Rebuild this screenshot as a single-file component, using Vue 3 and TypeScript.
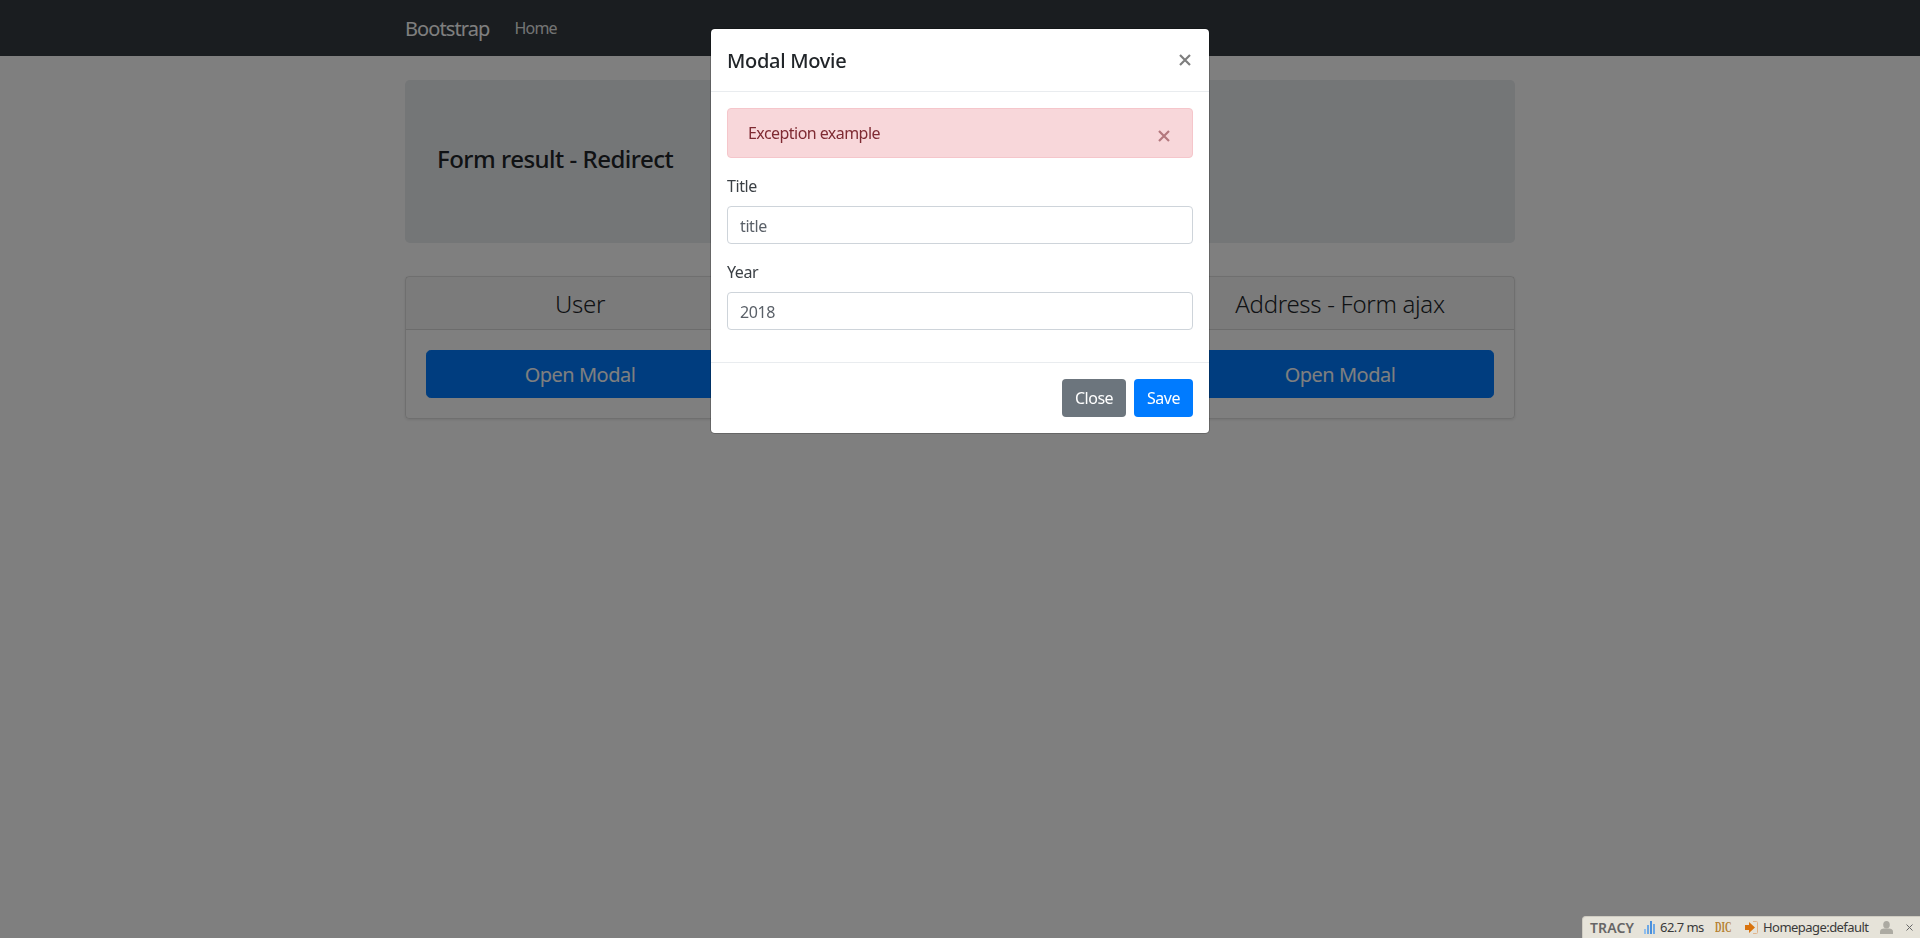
<template>
  <div class="page">
    <nav class="navbar">
      <div class="nav-inner">
        <a class="brand">Bootstrap</a>
        <a class="nav-link">Home</a>
      </div>
    </nav>

    <main class="container">
      <div class="jumbotron">
        <h4>Form result - Redirect</h4>
      </div>
      <div class="deck">
        <div v-for="card in cards" :key="card" class="card">
          <div class="card-header">{{ card }}</div>
          <div class="card-body">
            <button class="btn-open">Open Modal</button>
          </div>
        </div>
      </div>
    </main>

    <div class="backdrop"></div>

    <div class="modal">
      <div class="modal-header">
        <h5>Modal Movie</h5>
        <svg class="close" width="12" height="12" viewBox="0 0 12 12">
          <path d="M1 1l10 10M11 1L1 11" stroke="currentColor" stroke-width="2.2" fill="none" />
        </svg>
      </div>
      <div class="modal-body">
        <div class="alert">
          <span>Exception example</span>
          <svg class="alert-close" width="12" height="12" viewBox="0 0 12 12">
            <path d="M1 1l10 10M11 1L1 11" stroke="currentColor" stroke-width="2.2" fill="none" />
          </svg>
        </div>
        <div class="form-group">
          <label>Title</label>
          <input type="text" value="title" />
        </div>
        <div class="form-group">
          <label>Year</label>
          <input type="text" value="2018" />
        </div>
      </div>
      <div class="modal-footer">
        <button class="btn btn-grey">Close</button>
        <button class="btn btn-blue">Save</button>
      </div>
    </div>

    <div class="tracy">
      <span class="tracy-logo">TRACY</span>
      <svg class="tracy-chart" width="11" height="13" viewBox="0 0 11 13">
        <rect x="0" y="8" width="2" height="5" fill="#8fbdec" />
        <rect x="3" y="4" width="2" height="9" fill="#6ea8e4" />
        <rect x="6" y="0" width="2" height="13" fill="#4a90dc" />
        <rect x="9" y="3" width="2" height="10" fill="#6ea8e4" />
      </svg>
      <span class="tracy-time">62.7 ms</span>
      <span class="tracy-dic">DIC</span>
      <svg class="tracy-route" width="13" height="13" viewBox="0 0 13 13">
        <path d="M8 .5h3.5a1 1 0 0 1 1 1v10a1 1 0 0 1-1 1H8" fill="none" stroke="#e0b48c" />
        <path d="M0 4h4V1l6 5.5L4 12V9H0z" fill="#d9730d" />
      </svg>
      <span class="tracy-page">Homepage:default</span>
      <svg class="tracy-user" width="13" height="13" viewBox="0 0 13 13">
        <ellipse cx="6.5" cy="3.8" rx="3.3" ry="3.8" fill="#acaaa2" />
        <path d="M0 13v-2.5C0 8.5 2 7.5 4 7.5h5c2 0 4 1 4 3V13z" fill="#acaaa2" />
      </svg>
      <svg class="tracy-x" width="7" height="7" viewBox="0 0 7 7">
        <path d="M.5 .5l6 6M6.5 .5l-6 6" stroke="#666" stroke-width="1" fill="none" />
      </svg>
    </div>
  </div>
</template>

<script setup lang="ts">
const cards: string[] = ['User', 'Movie', 'Address - Form ajax']
</script>

<style>
body {
  margin: 0;
  background: #fff;
}
</style>

<style scoped>
.page {
  font-family: "Noto Sans", "Open Sans", sans-serif;
  font-size: 16px;
  line-height: 1.5;
  color: #212529;
  min-height: 938px;
}
.navbar {
  height: 56px;
  background: #343a40;
}
.nav-inner {
  width: 1110px;
  margin: 0 auto;
  height: 56px;
  display: flex;
  align-items: center;
}
.brand {
  font-size: 20px;
  color: #fff;
  margin-right: 17px;
  padding-top: 2px;
  letter-spacing: -0.9px;
}
.nav-link {
  color: rgba(255, 255, 255, 0.9);
  padding: 0 8px;
  letter-spacing: -0.8px;
}
.container {
  width: 1110px;
  margin: 0 auto;
  padding-top: 24px;
}
.jumbotron {
  height: 163px;
  box-sizing: border-box;
  padding: 0 32px 4px;
  display: flex;
  align-items: center;
  background: #e9ecef;
  border-radius: 4.8px;
  margin-bottom: 33px;
}
.jumbotron h4 {
  margin: 0;
  font-size: 24px;
  font-weight: 500;
  line-height: 1.2;
  letter-spacing: -0.5px;
}
.deck {
  display: flex;
  gap: 30px;
}
.card {
  flex: 1;
  border: 1px solid rgba(0, 0, 0, 0.125);
  border-radius: 4px;
  box-shadow: 0 1px 3px rgba(0, 0, 0, 0.1);
  box-sizing: border-box;
}
.card-header {
  height: 53px;
  box-sizing: border-box;
  border-bottom: 1px solid rgba(0, 0, 0, 0.125);
  background: rgba(0, 0, 0, 0.03);
  font-size: 24px;
  font-weight: 300;
  line-height: 54px;
  text-align: center;
  letter-spacing: -0.3px;
}
.card-body {
  padding: 20px;
}
.btn-open {
  display: block;
  width: 100%;
  height: 48px;
  padding: 2px 0 0;
  background: #007bff;
  color: #fff;
  border: 1px solid #007bff;
  border-radius: 4.8px;
  font: inherit;
  font-size: 20px;
  letter-spacing: -0.5px;
}
.backdrop {
  position: fixed;
  inset: 0;
  background: rgba(0, 0, 0, 0.5);
}
.modal {
  position: fixed;
  top: 28px;
  left: 710px;
  width: 500px;
  box-sizing: border-box;
  background: #fff;
  border: 1px solid rgba(0, 0, 0, 0.2);
  border-radius: 4.8px;
  background-clip: padding-box;
}
.modal-header {
  display: flex;
  justify-content: space-between;
  align-items: flex-start;
  padding: 16px;
  border-bottom: 1px solid #e9ecef;
}
.modal-header h5 {
  margin: 0;
  padding-top: 1px;
  font-size: 20px;
  font-weight: 500;
  line-height: 29px;
  letter-spacing: -0.3px;
}
.close {
  color: #000;
  opacity: 0.5;
  margin: 9px 2px 0 0;
}
.modal-body {
  padding: 16px;
}
.alert {
  display: flex;
  justify-content: space-between;
  height: 50px;
  box-sizing: border-box;
  padding: 12px 20px;
  margin-bottom: 16px;
  color: #7f2b33;
  background: #f8d7da;
  border: 1px solid #f5c6cb;
  border-radius: 4px;
  letter-spacing: -0.55px;
}
.alert-close {
  color: #721c24;
  opacity: 0.5;
  margin: 9px 2px 0 0;
}
.form-group {
  margin-bottom: 16px;
}
label {
  display: block;
  margin-bottom: 8px;
  color: #3a3f44;
  letter-spacing: -0.4px;
}
input {
  display: block;
  width: 100%;
  height: 38px;
  box-sizing: border-box;
  padding: 7px 12px 5px;
  font: inherit;
  color: #5a6068;
  background: #fff;
  border: 1px solid #ced4da;
  border-radius: 4px;
  letter-spacing: -0.4px;
}
.modal-footer {
  display: flex;
  justify-content: flex-end;
  gap: 8px;
  padding: 16px;
  border-top: 1px solid #e9ecef;
}
.btn {
  height: 38px;
  padding: 6px 12px;
  color: #fff;
  border: 1px solid transparent;
  border-radius: 4px;
  font: inherit;
  letter-spacing: -0.5px;
}
.btn-grey {
  background: #6c757d;
}
.btn-blue {
  background: #007bff;
}
.tracy {
  position: fixed;
  right: 0;
  bottom: 0;
  width: 338px;
  height: 22px;
  box-sizing: border-box;
  display: flex;
  align-items: center;
  background: #e6e3d9;
  border: 1px solid #cfccc2;
  border-right: 0;
  border-bottom: 0;
  border-top-left-radius: 4px;
  font-family: "Noto Sans", sans-serif;
  font-size: 13px;
  line-height: 1;
  color: #3a3a3a;
  padding-left: 7px;
}
.tracy-logo {
  width: 43px;
  margin-right: 11px;
  font-size: 14px;
  font-weight: 600;
  color: #666;
  letter-spacing: 0.1px;
}
.tracy-chart {
  margin-right: 5px;
}
.tracy-time {
  width: 44px;
  margin-right: 11px;
  white-space: nowrap;
  letter-spacing: -0.55px;
}
.tracy-dic {
  width: 14px;
  margin-right: 16px;
  font-family: "Liberation Serif", serif;
  font-weight: 700;
  font-size: 15px;
  color: #b5802e;
  white-space: nowrap;
  transform: scaleX(0.6);
  transform-origin: left center;
}
.tracy-route {
  margin-right: 5px;
}
.tracy-page {
  width: 105px;
  margin-right: 12px;
  white-space: nowrap;
  letter-spacing: -0.55px;
}
.tracy-user {
  margin-right: 13px;
}
</style>
